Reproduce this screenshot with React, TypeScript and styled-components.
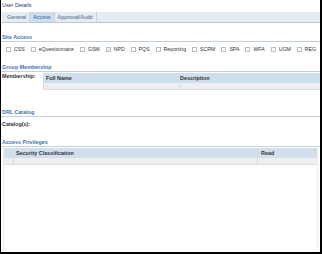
import React from "react";
import styled, { createGlobalStyle, css } from "styled-components";

const GlobalStyle = createGlobalStyle`
  html, body {
    margin: 0;
    padding: 0;
    background: #ffffff;
  }
  body {
    font-family: "Liberation Sans", Arial, sans-serif;
    font-size: 5.4px;
    color: #333333;
  }
`;

const Frame = styled.div`
  width: 322px;
  height: 254px;
  box-sizing: border-box;
  border-left: 1px solid #000000;
  border-right: 2px solid #000000;
  border-bottom: 2px solid #000000;
  display: flex;
  flex-direction: column;
  overflow: hidden;
`;

const Title = styled.div`
  padding: 1px 0 0 1px;
  line-height: 8px;
  color: #2c4466;
`;

const TabBar = styled.div`
  margin: 3px 0 0 1px;
  height: 10px;
  display: flex;
  align-items: stretch;
  padding-left: 2px;
  background: #e5ecf3;
  border-bottom: 1px solid #b7c9db;
`;

const Tab = styled.div<{ active?: boolean }>`
  display: flex;
  align-items: center;
  padding: 0 3px;
  color: #4a6480;
  border-right: 1px solid #c5d4e2;
  ${({ active }) =>
    active &&
    css`
      background: #cfdeed;
      color: #2a62a4;
    `}
`;

const SectionHead = styled.div<{ top: number }>`
  margin-top: ${({ top }) => top}px;
  line-height: 7px;
  padding-left: 1px;
  color: #3f73b0;
  font-weight: bold;
  border-bottom: 1px solid #c3d0de;
`;

const CheckRow = styled.div`
  margin-top: 3px;
  height: 8px;
  display: flex;
  align-items: center;
  gap: 6px;
  padding-left: 5px;
  font-size: 5.2px;
`;

const CheckItem = styled.label`
  display: flex;
  align-items: center;
  gap: 3px;
  color: #333333;
  white-space: nowrap;
`;

const Box = styled.span`
  width: 3px;
  height: 3px;
  border: 1px solid #bdbdbd;
  background: #ffffff;
  display: flex;
  align-items: center;
  justify-content: center;
`;

const FieldRow = styled.div<{ top: number }>`
  margin-top: ${({ top }) => top}px;
  display: flex;
  align-items: flex-start;
`;

const FieldLabel = styled.div<{ width?: number }>`
  width: ${({ width }) => width ?? 40}px;
  padding-left: 1px;
  line-height: 7px;
  font-weight: bold;
  color: #333333;
  flex-shrink: 0;
`;

const Grid = styled.div`
  flex: 1;
  display: flex;
  flex-direction: column;
`;

const GridHead = styled.div<{ cols: string }>`
  display: grid;
  grid-template-columns: ${({ cols }) => cols};
  height: 10px;
  align-items: center;
  background: #cfdfee;
  font-weight: bold;
  color: #333333;
`;

const GridRow = styled.div<{ cols: string }>`
  display: grid;
  grid-template-columns: ${({ cols }) => cols};
  height: 6px;
  align-items: center;
  background: #efefef;
  color: #888888;
  border-bottom: 1px solid #dddddd;
`;

const Cell = styled.div<{ sep?: boolean }>`
  padding-left: 3px;
  height: 100%;
  display: flex;
  align-items: center;
  ${({ sep }) =>
    sep &&
    css`
      border-left: 1px solid #d8d8d8;
    `}
`;

const PrivPanel = styled.div`
  margin: 1px 2px 0 2px;
  flex: 1;
  margin-bottom: 2px;
  border-left: 1px solid #ececec;
  border-right: 1px solid #ececec;
  display: flex;
  flex-direction: column;
`;

const sites = [
  "CSS",
  "eQuestionnaire",
  "GSM",
  "NPD",
  "PQS",
  "Reporting",
  "SCRM",
  "SPA",
  "WFA",
  "UGM",
  "REG",
];

const Check = () => (
  <svg width="3" height="3" viewBox="0 0 4 4">
    <path d="M0.5 2 L1.6 3.2 L3.6 0.6" stroke="#a8a8a8" strokeWidth="0.9" fill="none" />
  </svg>
);

export default function App() {
  const memberCols = "134px 1fr";
  const privCols = "9px 244px 1fr";

  return (
    <>
      <GlobalStyle />
      <Frame>
        <Title>User Details</Title>
        <TabBar>
          <Tab>General</Tab>
          <Tab active>Access</Tab>
          <Tab>Approval/Audit</Tab>
        </TabBar>

        <SectionHead top={11}>Site Access</SectionHead>
        <CheckRow>
          {sites.map((s) => (
            <CheckItem key={s}>
              <Box>{s === "NPD" && <Check />}</Box>
              {s}
            </CheckItem>
          ))}
        </CheckRow>

        <SectionHead top={11}>Group Membership</SectionHead>
        <FieldRow top={1}>
          <FieldLabel width={41}>Membership:</FieldLabel>
          <Grid>
            <GridHead cols={memberCols}>
              <Cell>Full Name</Cell>
              <Cell>Description</Cell>
            </GridHead>
            <GridRow cols={memberCols}>
              <Cell sep>-</Cell>
              <Cell>-</Cell>
            </GridRow>
          </Grid>
        </FieldRow>

        <SectionHead top={19}>DRL Catalog</SectionHead>
        <FieldRow top={4}>
          <FieldLabel>Catalog(s):</FieldLabel>
        </FieldRow>

        <SectionHead top={11}>Access Privileges</SectionHead>
        <PrivPanel>
          <GridHead cols={privCols}>
            <Cell />
            <Cell>Security Classification</Cell>
            <Cell sep>Read</Cell>
          </GridHead>
          <GridRow cols={privCols}>
            <Cell />
            <Cell sep />
            <Cell sep />
          </GridRow>
        </PrivPanel>
      </Frame>
    </>
  );
}
